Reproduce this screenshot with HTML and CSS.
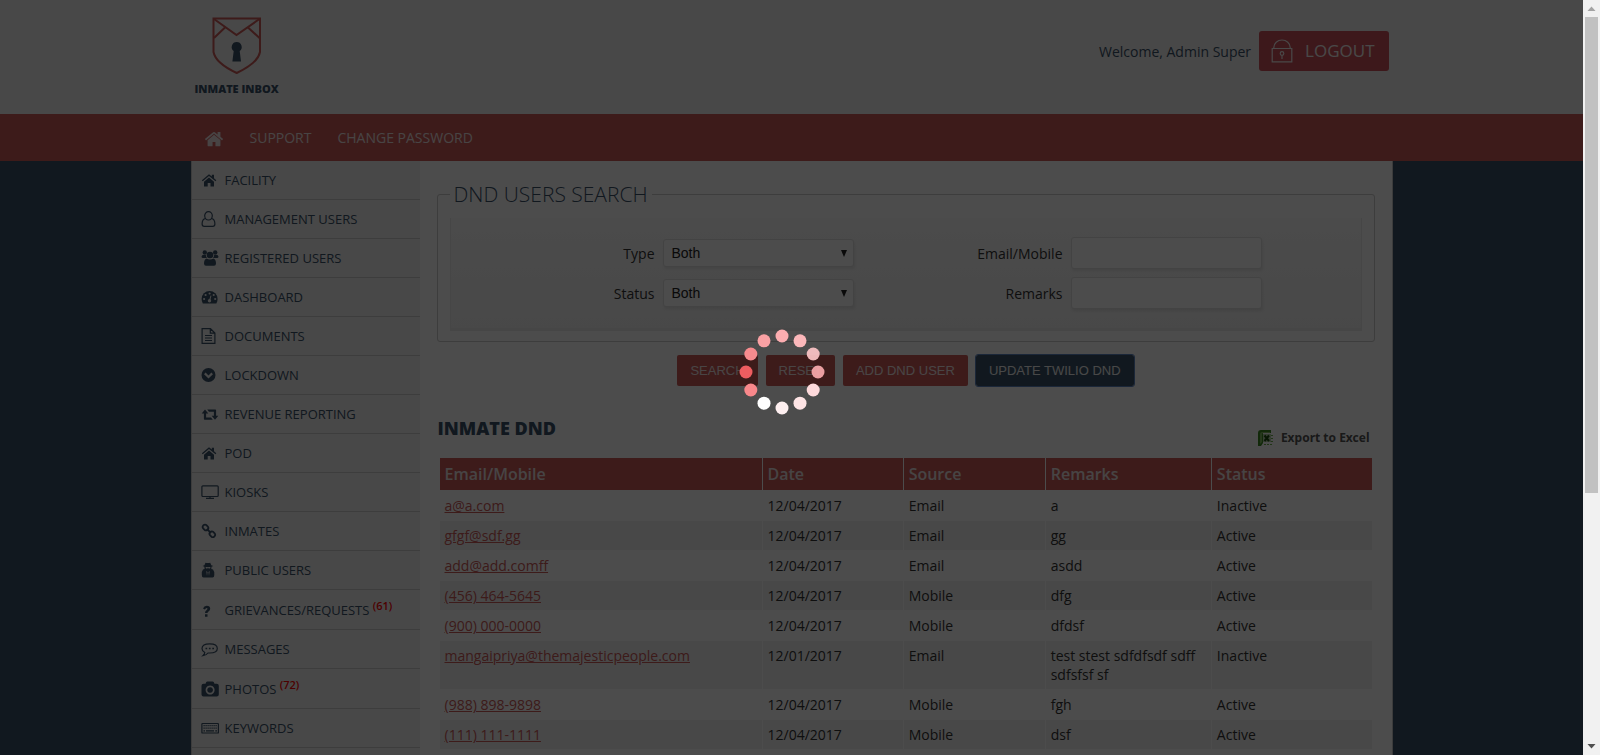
FILE: index.html
```html
<!DOCTYPE html>
<html lang="en">
<head>
<meta charset="utf-8">
<title>Inmate Inbox - DND Users</title>
<link rel="stylesheet" href="styles.css">
</head>
<body>
<div class="page">
  <header class="header">
    <div class="wrap header-row">
      <a class="logo" href="#">
        <svg class="logo-mark" viewBox="0 0 50 58" width="50" height="58" fill="none" stroke="#cb5a58" stroke-width="2">
          <path d="M1.500 1.500H48V35Q46 46 24.700 56Q3.500 46 1.500 35Z"/>
          <path d="M2 2L24.500 18L47.500 2M2 21L13 10.500M47.500 21L36 10.500"/>
          <path fill="#395068" stroke="none" d="M24.700 25a5 5 0 0 1 3 9l1.300 10.500h-8.600L21.700 34a5 5 0 0 1 3-9z"/>
        </svg>
        <span class="logo-text">INMATE INBOX</span>
      </a>
      <div class="account">
        <span>Welcome, Admin Super</span>
        <button class="logout" type="button">
          <svg viewBox="0 0 22 24" width="22" height="24" fill="none" stroke="currentColor" stroke-width="1.200"><path d="M1.200 9.500h19.600v13.300H1.200zM2.800 9.500V8.500a8.200 7.500 0 0 1 16.400 0v1"/><circle cx="11" cy="14.500" r="1.800"/><path d="M11 16.500v3.500"/></svg>
          LOGOUT
        </button>
      </div>
    </div>
  </header>
  <nav class="nav">
    <div class="wrap nav-row">
      <a href="#" aria-label="Home"><svg viewBox="0 0 1792 1600" width="20" height="18" fill="currentColor"><path d="M1472 992v480q0 26-19 45t-45 19h-384v-384h-256v384h-384q-26 0-45-19t-19-45v-480l576-477 575 474zm223-69l-62 74q-8 9-21 11h-3q-13 0-21-7l-692-577-692 577q-12 8-24 7-13-2-21-11l-62-74q-8-10-7-23.500t11-21.500l719-599q32-26 76-26t76 26l244 204v-195q0-14 9-23t23-9h192q14 0 23 9t9 23v408l219 182q10 8 11 21.500t-7 23.500z"/></svg></a>
      <a href="#">SUPPORT</a>
      <a href="#">CHANGE PASSWORD</a>
    </div>
  </nav>
  <div class="wrap content">
    <aside class="sidebar">
      <a class="item" href="#"><svg class="icon" viewBox="0 0 18 16"><path d="M8 5.500L13 9.700V14.500H9.500V11H6.700V14.500H3V9.700ZM8 2.200L10.800 4.500V2.800H13V6.300L15.300 8.300L14.500 9.200L8 3.900L1.700 9.200L.9 8.300Z"/></svg>FACILITY</a>
      <a class="item" href="#"><svg class="icon line" viewBox="0 0 18 16"><path d="M4.600 7.500C1.500 8 1.100 10.500 1.100 13C1.100 14.700 2 15.400 3.200 15.400H11.800C13 15.400 13.900 14.700 13.900 13C13.900 10.500 13.500 8 10.400 7.500"/><ellipse cx="7.500" cy="4.800" rx="3.800" ry="4.200"/></svg>MANAGEMENT USERS</a>
      <a class="item" href="#"><svg class="icon" viewBox="0 0 18 16"><circle cx="3.800" cy="2.500" r="2.200"/><circle cx="14.200" cy="2.500" r="2.200"/><circle cx="9" cy="5" r="3.300"/><path d="M1.500 5H4.800Q5 7 6 8H2Q.5 8 .5 6.500zM16.500 5H13.200Q13 7 12 8H16Q17.500 8 17.500 6.500zM5.500 8.500Q9 10.500 12.500 8.500Q15 9.500 15 13.500Q15 15.700 13 15.700H5Q3 15.700 3 13.500Q3 9.500 5.500 8.500z"/></svg>REGISTERED USERS</a>
      <a class="item" href="#"><svg class="icon" viewBox="0 0 18 16"><path d="M.6 10a8 8 0 0 1 16 0Q16.600 12.500 15.400 14.500H1.800Q.6 12.500 .6 10z"/><g fill="#f0f0f0"><circle cx="3.100" cy="10" r="1.100"/><circle cx="4.600" cy="6" r="1.100"/><circle cx="8.600" cy="4.500" r="1.100"/><circle cx="12.700" cy="6" r="1.100"/><circle cx="14.200" cy="10" r="1.100"/><circle cx="8.500" cy="11.800" r="1.700"/><path d="M9.500 6.500L10.500 6.700L9.200 11.500H8z"/></g></svg>DASHBOARD</a>
      <a class="item" href="#"><svg class="icon line" viewBox="0 0 18 16"><path d="M1.100 .7H9.500L13.900 5V15.400H1.100zM9.300 1V5.200H13.700M4 7.500H11M4 10H11M4 12.500H11"/></svg>DOCUMENTS</a>
      <a class="item" href="#"><svg class="icon" viewBox="0 0 18 16"><circle cx="7.500" cy="8" r="7"/><path d="M3.800 6.400L7.500 10L11.200 6.400" fill="none" stroke="#f0f0f0" stroke-width="2.200"/></svg>LOCKDOWN</a>
      <a class="item" href="#"><svg class="icon" viewBox="0 0 18 16"><path d="M4 3.500L7.300 7.600H5.100V11.500H10L11.800 13.800H3.700Q2.900 13.800 2.900 13V7.600H.7zM14 13.800L10.700 9.700H12.900V5.800H8L6.200 3.500H14.300Q15.100 3.500 15.100 4.300V9.700H17.300z"/></svg>REVENUE REPORTING</a>
      <a class="item" href="#"><svg class="icon" viewBox="0 0 18 16"><path d="M8 5.500L13 9.700V14.500H9.500V11H6.700V14.500H3V9.700ZM8 2.200L10.800 4.500V2.800H13V6.300L15.300 8.300L14.500 9.200L8 3.900L1.700 9.200L.9 8.300Z"/></svg>POD</a>
      <a class="item" href="#"><svg class="icon line" viewBox="0 0 18 16"><rect x=".9" y="1.800" width="16.300" height="10.700" rx="1"/><path d="M5 14.400H13M9 12.500V14.400"/></svg>KIOSKS</a>
      <a class="item" href="#"><svg class="icon link" viewBox="0 0 18 16"><rect x="-3" y="-2.300" width="6" height="4.600" rx="2" transform="translate(4.500 4.500) rotate(45)"/><rect x="-3" y="-2.300" width="6" height="4.600" rx="2" transform="translate(11.300 11.300) rotate(45)"/><path d="M5.800 5.800L10 10"/></svg>INMATES</a>
      <a class="item" href="#"><svg class="icon" viewBox="0 0 18 16"><path d="M4.500 .8Q7 1.400 9.200 .8L10.300 3.300L12.300 4L10.500 4.800L10.300 7L12 7.500Q13.500 9 13.300 13Q13.300 15.500 11.500 15.500H2.500Q.8 15.500 .8 13Q.6 9 2 7.500L3.600 7L3.400 4.800L1.600 4L3.400 3.300z"/><path fill="#f0f0f0" d="M4.500 5H6.500L7 5.500L7.500 5H9.500L9 6.500H7.800L7 6L6.200 6.500H5zM5.300 9L6.500 10L6 14zM8.700 9L7.500 10L8 14z"/></svg>PUBLIC USERS</a>
      <a class="item has-count" href="#"><svg class="icon" viewBox="0 0 18 16"><path d="M2 6.400Q3 3.700 5.700 3.700Q9.200 3.700 9.200 6.700Q9.200 8.400 7.500 9.400Q6.500 10 6.500 11H4Q4 8.800 5.700 7.900Q6.500 7.400 6.500 6.800Q6.500 6 5.600 6Q4.700 6 3.800 7.500zM4 12.200H6.500V14.700H4z"/></svg><span>GRIEVANCES/REQUESTS <sup>(61)</sup></span></a>
      <a class="item" href="#"><svg class="icon line" viewBox="0 0 18 16"><path d="M3.800 11.500Q1 10 1 7.500Q1 2.900 8.700 2.900Q16.300 2.900 16.300 7.500Q16.300 12 8.700 12H7Q5 14.500 1.900 14.700Q3.500 13.500 3.800 11.500z"/><path d="M4.500 7.500H6.200M7.900 7.500H9.600M11.300 7.500H13" stroke-width="1.700"/></svg>MESSAGES</a>
      <a class="item has-count" href="#"><svg class="icon" viewBox="0 0 18 16"><path fill-rule="evenodd" d="M2.500 2.700H4.500L5.300 1Q5.700 .4 6.500 .4H11.500Q12.300 .4 12.700 1L13.500 2.700H15.700Q17.800 2.700 17.800 4.800V13.500Q17.800 15.500 15.700 15.500H2.500Q.5 15.500 .5 13.500V4.800Q.5 2.700 2.500 2.700zM9.100 4.500a4.500 4.500 0 1 0 .01 0zM9.100 6.200a2.800 2.800 0 1 1-.01 0z"/></svg><span>PHOTOS <sup>(72)</sup></span></a>
      <a class="item" href="#"><svg class="icon line" viewBox="0 0 18 16"><rect x=".9" y="3.500" width="16.500" height="9.500" rx=".6"/><path d="M2.500 5.700H16M2.500 8.200H16" stroke-dasharray="1.200 .8"/><path d="M2.500 10.800H4M5 10.800H13M14.300 10.800H16"/></svg>KEYWORDS</a>
    </aside>
    <main class="main">
      <fieldset class="search">
        <legend>DND USERS SEARCH</legend>
        <div class="panel">
          <label for="type">Type</label>
          <div class="select"><select id="type"><option>Both</option></select></div>
          <label for="email">Email/Mobile</label>
          <input id="email" type="text">
          <label class="first" for="status">Status</label>
          <div class="select"><select id="status"><option>Both</option></select></div>
          <label for="remarks">Remarks</label>
          <input id="remarks" type="text">
        </div>
      </fieldset>
      <div class="actions">
        <button type="button">SEARCH</button>
        <button type="button">RESET</button>
        <button type="button">ADD DND USER</button>
        <button class="update" type="button">UPDATE TWILIO DND</button>
      </div>
      <div class="title-row">
        <h1>INMATE DND</h1>
        <a class="export" href="#">
          <svg viewBox="0 0 16 16" width="16" height="16"><path fill="#3d8a24" d="M0 16V3Q0 0 3 0H13V3H5V13L3 16z"/><path fill="#84bd62" d="M2 14V4Q2 2 4 2H12V3H5Q4 3 4 5V12z"/><path fill="#b5cfa8" d="M5 4H13V12H5z"/><path stroke="#1c4c10" stroke-width="2" d="M6.500 5.500L11 11M11 5.500L6.500 11"/><path stroke="#6fae4e" d="M13 5.500H16M13 8.500H16M13 11.500H16M6 14.500H15" stroke-dasharray="2 1"/></svg>
          Export to Excel
        </a>
      </div>
      <table class="grid">
        <colgroup><col class="c-email"><col class="c-date"><col class="c-source"><col class="c-remarks"><col class="c-status"></colgroup>
        <thead><tr><th>Email/Mobile</th><th>Date</th><th>Source</th><th>Remarks</th><th>Status</th></tr></thead>
        <tbody>
          <tr><td><a href="#">a@a.com</a></td><td>12/04/2017</td><td>Email</td><td>a</td><td>Inactive</td></tr>
          <tr><td><a href="#">gfgf@sdf.gg</a></td><td>12/04/2017</td><td>Email</td><td>gg</td><td>Active</td></tr>
          <tr><td><a href="#">add@add.comff</a></td><td>12/04/2017</td><td>Email</td><td>asdd</td><td>Active</td></tr>
          <tr><td><a href="#">(456) 464-5645</a></td><td>12/04/2017</td><td>Mobile</td><td>dfg</td><td>Active</td></tr>
          <tr><td><a href="#">(900) 000-0000</a></td><td>12/04/2017</td><td>Mobile</td><td>dfdsf</td><td>Active</td></tr>
          <tr><td><a href="#">mangaipriya@themajesticpeople.com</a></td><td>12/01/2017</td><td>Email</td><td>test stest sdfdfsdf sdff sdfsfsf sf</td><td>Inactive</td></tr>
          <tr><td><a href="#">(988) 898-9898</a></td><td>12/04/2017</td><td>Mobile</td><td>fgh</td><td>Active</td></tr>
          <tr><td><a href="#">(111) 111-1111</a></td><td>12/04/2017</td><td>Mobile</td><td>dsf</td><td>Active</td></tr>
        </tbody>
      </table>
    </main>
  </div>
  <div class="overlay" role="status" aria-label="Loading">
    <svg class="spinner" viewBox="-46 -46 92 92" width="92" height="92">
      <circle cx="0" cy="-36" r="6.500" fill="#fcadb0"/>
      <circle cx="18" cy="-31.200" r="6.500" fill="#fbb7ba"/>
      <circle cx="31.200" cy="-18" r="6.500" fill="#fcc4c6" fill-opacity=".93"/>
      <circle cx="36" cy="0" r="6.500" fill="#f8a9ac" fill-opacity=".93"/>
      <circle cx="31.200" cy="18" r="6.500" fill="#fdd9db"/>
      <circle cx="18" cy="31.200" r="6.500" fill="#fee4e5"/>
      <circle cx="0" cy="36" r="6.500" fill="#feeff0"/>
      <circle cx="-18" cy="31.200" r="6.500" fill="#fff"/>
      <circle cx="-31.200" cy="18" r="6.500" fill="#f9888b"/>
      <circle cx="-36" cy="0" r="6.500" fill="#ee5d60"/>
      <circle cx="-31.200" cy="-18" r="6.500" fill="#f78b8e"/>
      <circle cx="-18" cy="-31.200" r="6.500" fill="#faa1a4"/>
    </svg>
  </div>
</div>
<div class="scrollbar" aria-hidden="true">
  <svg viewBox="0 0 17 17" width="17" height="17"><path fill="#a3a3a3" d="M8.500 6.500L12.500 11H4.500z"/></svg>
  <div class="track"><div class="thumb"></div></div>
  <svg viewBox="0 0 17 17" width="17" height="17"><path fill="#505050" d="M8.500 10.500L12.500 6H4.500z"/></svg>
</div>
</body>
</html>
```
FILE: styles.css
```css
* { box-sizing: border-box; }
body {
  margin: 0;
  display: flex;
  height: 100vh;
  overflow: hidden;
  font: 14px/19px "Open Sans", "Noto Sans", sans-serif;
  color: #333;
}
a { color: inherit; text-decoration: none; }
.page {
  position: relative;
  flex: 1;
  min-width: 0;
  display: flex;
  flex-direction: column;
  overflow: hidden;
  background: #3a5368;
}
.wrap { width: 100%; max-width: 1202px; margin: 0 auto; }

.header { flex: none; background: #f1f1f1; }
.header-row {
  display: flex;
  justify-content: space-between;
  align-items: flex-start;
  padding: 17px 4px;
}
.logo { display: flex; flex-direction: column; align-items: center; }
.logo-mark { display: block; }
.logo-text {
  margin-top: 5px;
  font-size: 11px;
  line-height: 17px;
  font-weight: 800;
  color: #395068;
}
.account {
  display: flex;
  align-items: center;
  gap: 8px;
  padding-top: 14px;
  color: #395068;
}
.logout {
  display: flex;
  align-items: center;
  gap: 12px;
  height: 40px;
  padding: 0 14px 0 12px;
  border: 0;
  border-radius: 3px;
  background: #cb505a;
  color: #f5f0f0;
  font: 500 17px/24px "Open Sans", sans-serif;
}
.nav { flex: none; background: #cb5a58; }
.nav-row {
  display: flex;
  align-items: center;
  gap: 26px;
  padding: 14px 13px;
  color: #f1e4e4;
  font-weight: 500;
}
.nav-row a { display: block; }
.nav-row svg { display: block; }

.content {
  flex: 1;
  display: flex;
  border: 1px solid #c9c9c9;
  border-width: 0 1px;
  background: #fff;
}
.sidebar { flex: none; width: 228px; background: #f1f1f1; }
.item {
  display: flex;
  align-items: flex-start;
  gap: 6px;
  padding: 10px 9px 9px;
  border-bottom: 1px solid #cbcbcb;
  font-size: 13px;
  color: #395068;
}
.has-count { padding-top: 11px; }
.icon {
  flex: none;
  width: 18px;
  height: 16px;
  margin-top: 1px;
  fill: #395068;
}
.line { fill: none; stroke: #395068; stroke-width: 1.2; }
.link { fill: none; stroke: #395068; stroke-width: 1.8; }
sup { font-size: 11px; line-height: 0; font-weight: 600; color: #f00; }

.main { flex: 1; min-width: 0; padding: 19px 17px 0; }
.search {
  min-width: 0;
  margin: 0;
  padding: 10px 12px;
  border: 1px solid #cbcbcb;
  border-radius: 3px;
}
legend {
  padding: 0 4px;
  font-size: 21px;
  line-height: 28px;
  font-weight: 300;
  color: #395068;
}
.panel {
  display: grid;
  grid-template-columns: 212fr 191fr 217fr 191fr 99fr;
  row-gap: 8px;
  align-items: center;
  padding: 19px 0;
  border: 1px solid #ececec;
  border-width: 0 1px 3px;
  background: linear-gradient(#fbfbfb, #f2f2f2);
}
.panel label { padding-right: 8px; text-align: right; }
.panel label.first { grid-column: 1; }
.panel input, .select {
  width: 100%;
  border: 1px solid #e0e0e0;
  border-radius: 3px;
  background: #fff;
  box-shadow: 1px 2px 3px rgba(0, 0, 0, .08);
}
.panel input { height: 32px; }
.select { display: flex; align-items: center; height: 28px; padding-right: 6px; }
.select::after { content: ""; border: solid transparent; border-width: 7px 3px 0; border-top-color: #222; }
select {
  appearance: none;
  flex: 1;
  min-width: 0;
  padding: 0 8px;
  border: 0;
  background: none;
  color: #222;
  font: 14px/20px "Liberation Sans", Arial, sans-serif;
}

.actions { display: flex; justify-content: center; gap: 8px; margin-top: 13px; }
.actions button {
  height: 31px;
  padding: 0 13px;
  border: 0;
  border-radius: 2px;
  background: #cb5a58;
  color: #f5e8e8;
  font: 13px/20px "Liberation Sans", Arial, sans-serif;
}
.actions .update { background: #3a5368; color: #f0f0f0; outline: 1px solid #5a83c0; }

.title-row {
  display: flex;
  justify-content: space-between;
  align-items: flex-start;
  margin-top: 30px;
  padding: 0 5px 11px 1px;
}
h1 { margin: 0; font-size: 18px; line-height: 25px; font-weight: 800; color: #395068; }
.export {
  display: flex;
  gap: 7px;
  padding-top: 14px;
  font: 700 12px/16px "Noto Sans", "Open Sans", sans-serif;
  color: #555;
}
.grid {
  width: calc(100% - 4px);
  margin: 0 2px;
  table-layout: fixed;
  border-collapse: separate;
  border-spacing: 1px;
}
.c-email { width: 34.7%; }
.c-date { width: 15.1%; }
.c-source { width: 15.2%; }
.c-remarks { width: 17.8%; }
.c-status { width: 17.2%; }
th, td { padding: 5px; text-align: left; vertical-align: top; }
th {
  padding: 4px 5px;
  background: #cb5a58;
  color: #eee4e4;
  font-size: 16px;
  line-height: 24px;
  font-weight: 600;
}
td a { color: #cb5a58; text-decoration: underline; }
tbody tr:nth-child(even) td { background: #f2f2f2; }

.overlay {
  position: absolute;
  inset: 0;
  display: grid;
  place-items: center;
  padding: 0 20px 12px 0;
  background: rgba(0, 0, 0, .7);
}
.scrollbar {
  flex: none;
  width: 17px;
  display: flex;
  flex-direction: column;
  background: #f1f1f1;
}
.scrollbar svg { display: block; }
.track { flex: 1; padding: 0 2px; }
.thumb { height: 66%; background: #c1c1c1; }
```
